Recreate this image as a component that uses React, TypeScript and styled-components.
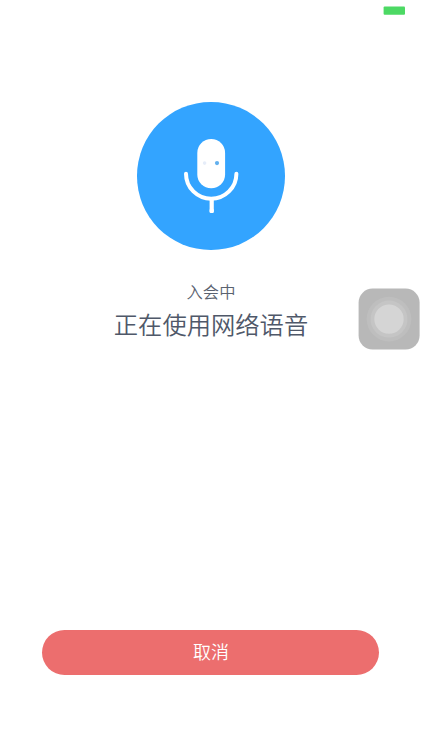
import React from 'react';
import styled, { createGlobalStyle } from 'styled-components';

const GlobalStyle = createGlobalStyle`
  html, body, #root { height: 100%; }
  body {
    margin: 0;
    overflow: hidden;
    background: #fff;
    font-family: "Noto Sans CJK SC", sans-serif;
  }
`;

const Screen = styled.main`
  position: relative;
  box-sizing: border-box;
  height: 750px;
  width: 422px;
  display: flex;
  flex-direction: column;
  align-items: center;
  background: #fff;
`;

const StatusBar = styled.header`
  box-sizing: border-box;
  align-self: stretch;
  height: 102px;
  padding: 6px 17px 0 0;
  display: flex;
  justify-content: flex-end;
`;

const Battery = styled.svg`
  display: block;
  width: 22px;
  height: 9px;
`;

const VoiceBadge = styled.div`
  width: 147.6px;
  height: 147.6px;
  border-radius: 50%;
  background: #33a4ff;
`;

const MicDrawing = styled.svg`
  display: block;
  width: 100%;
  height: 100%;
`;

const Status = styled.p`
  margin: 29.4px 0 0;
  font-size: 16.3px;
  font-weight: 350;
  line-height: 24px;
  color: #5a6270;
`;

const Title = styled.h1`
  margin: 3px 0 0;
  font-size: 24.3px;
  font-weight: 350;
  line-height: 36px;
  color: #4f5869;
`;

const CancelButton = styled.button`
  box-sizing: border-box;
  width: 337px;
  height: 45px;
  margin: auto 1px 75px 0;
  padding: 0 0 2px 1px;
  border: 0;
  border-radius: 23px;
  background: #ec6e6e;
  color: #fff;
  font: 350 18px/43px "Noto Sans CJK SC", sans-serif;
`;

const AssistiveTouch = styled.svg`
  position: absolute;
  left: 358px;
  top: 288px;
  width: 62px;
  height: 62px;
`;

const Microphone = () => (
  <MicDrawing viewBox="137.2 102 147.6 147.6" aria-hidden="true">
    <rect x="197.5" y="139" width="27.8" height="49.3" rx="13.9" fill="#fff" />
    <circle cx="204.8" cy="163.1" r="1.8" fill="#e6edf9" />
    <circle cx="217.2" cy="163.1" r="2.1" fill="#62b0ee" />
    <path
      d="M186.2 173.7a25.2 25 0 0 0 50.4 0"
      fill="none"
      stroke="#fff"
      strokeWidth="4"
      strokeLinecap="round"
    />
    <path d="M211.9 198.5V211.8" stroke="#fff" strokeWidth="4.2" />
    <rect x="209.8" y="209" width="4.2" height="4" rx="1" fill="#fff" />
  </MicDrawing>
);

export default function App() {
  return (
    <>
      <GlobalStyle />
      <Screen>
        <StatusBar>
          <Battery viewBox="0 0 22 9" aria-hidden="true">
            <rect x="0.6" y="0.4" width="21.4" height="8.4" rx="1" fill="#4cd964" />
          </Battery>
        </StatusBar>
        <VoiceBadge>
          <Microphone />
        </VoiceBadge>
        <Status>入会中</Status>
        <Title>正在使用网络语音</Title>
        <CancelButton type="button">取消</CancelButton>
        <AssistiveTouch viewBox="358 288 62 62" aria-hidden="true">
          <rect x="358.6" y="288.6" width="61" height="61" rx="14" fill="#b8b8b8" />
          <circle cx="389" cy="319.1" r="22.3" fill="#bebebe" />
          <circle cx="389" cy="319.1" r="18.5" fill="#c5c5c5" />
          <circle cx="389" cy="319.1" r="14.7" fill="#d5d5d5" />
        </AssistiveTouch>
      </Screen>
    </>
  );
}
